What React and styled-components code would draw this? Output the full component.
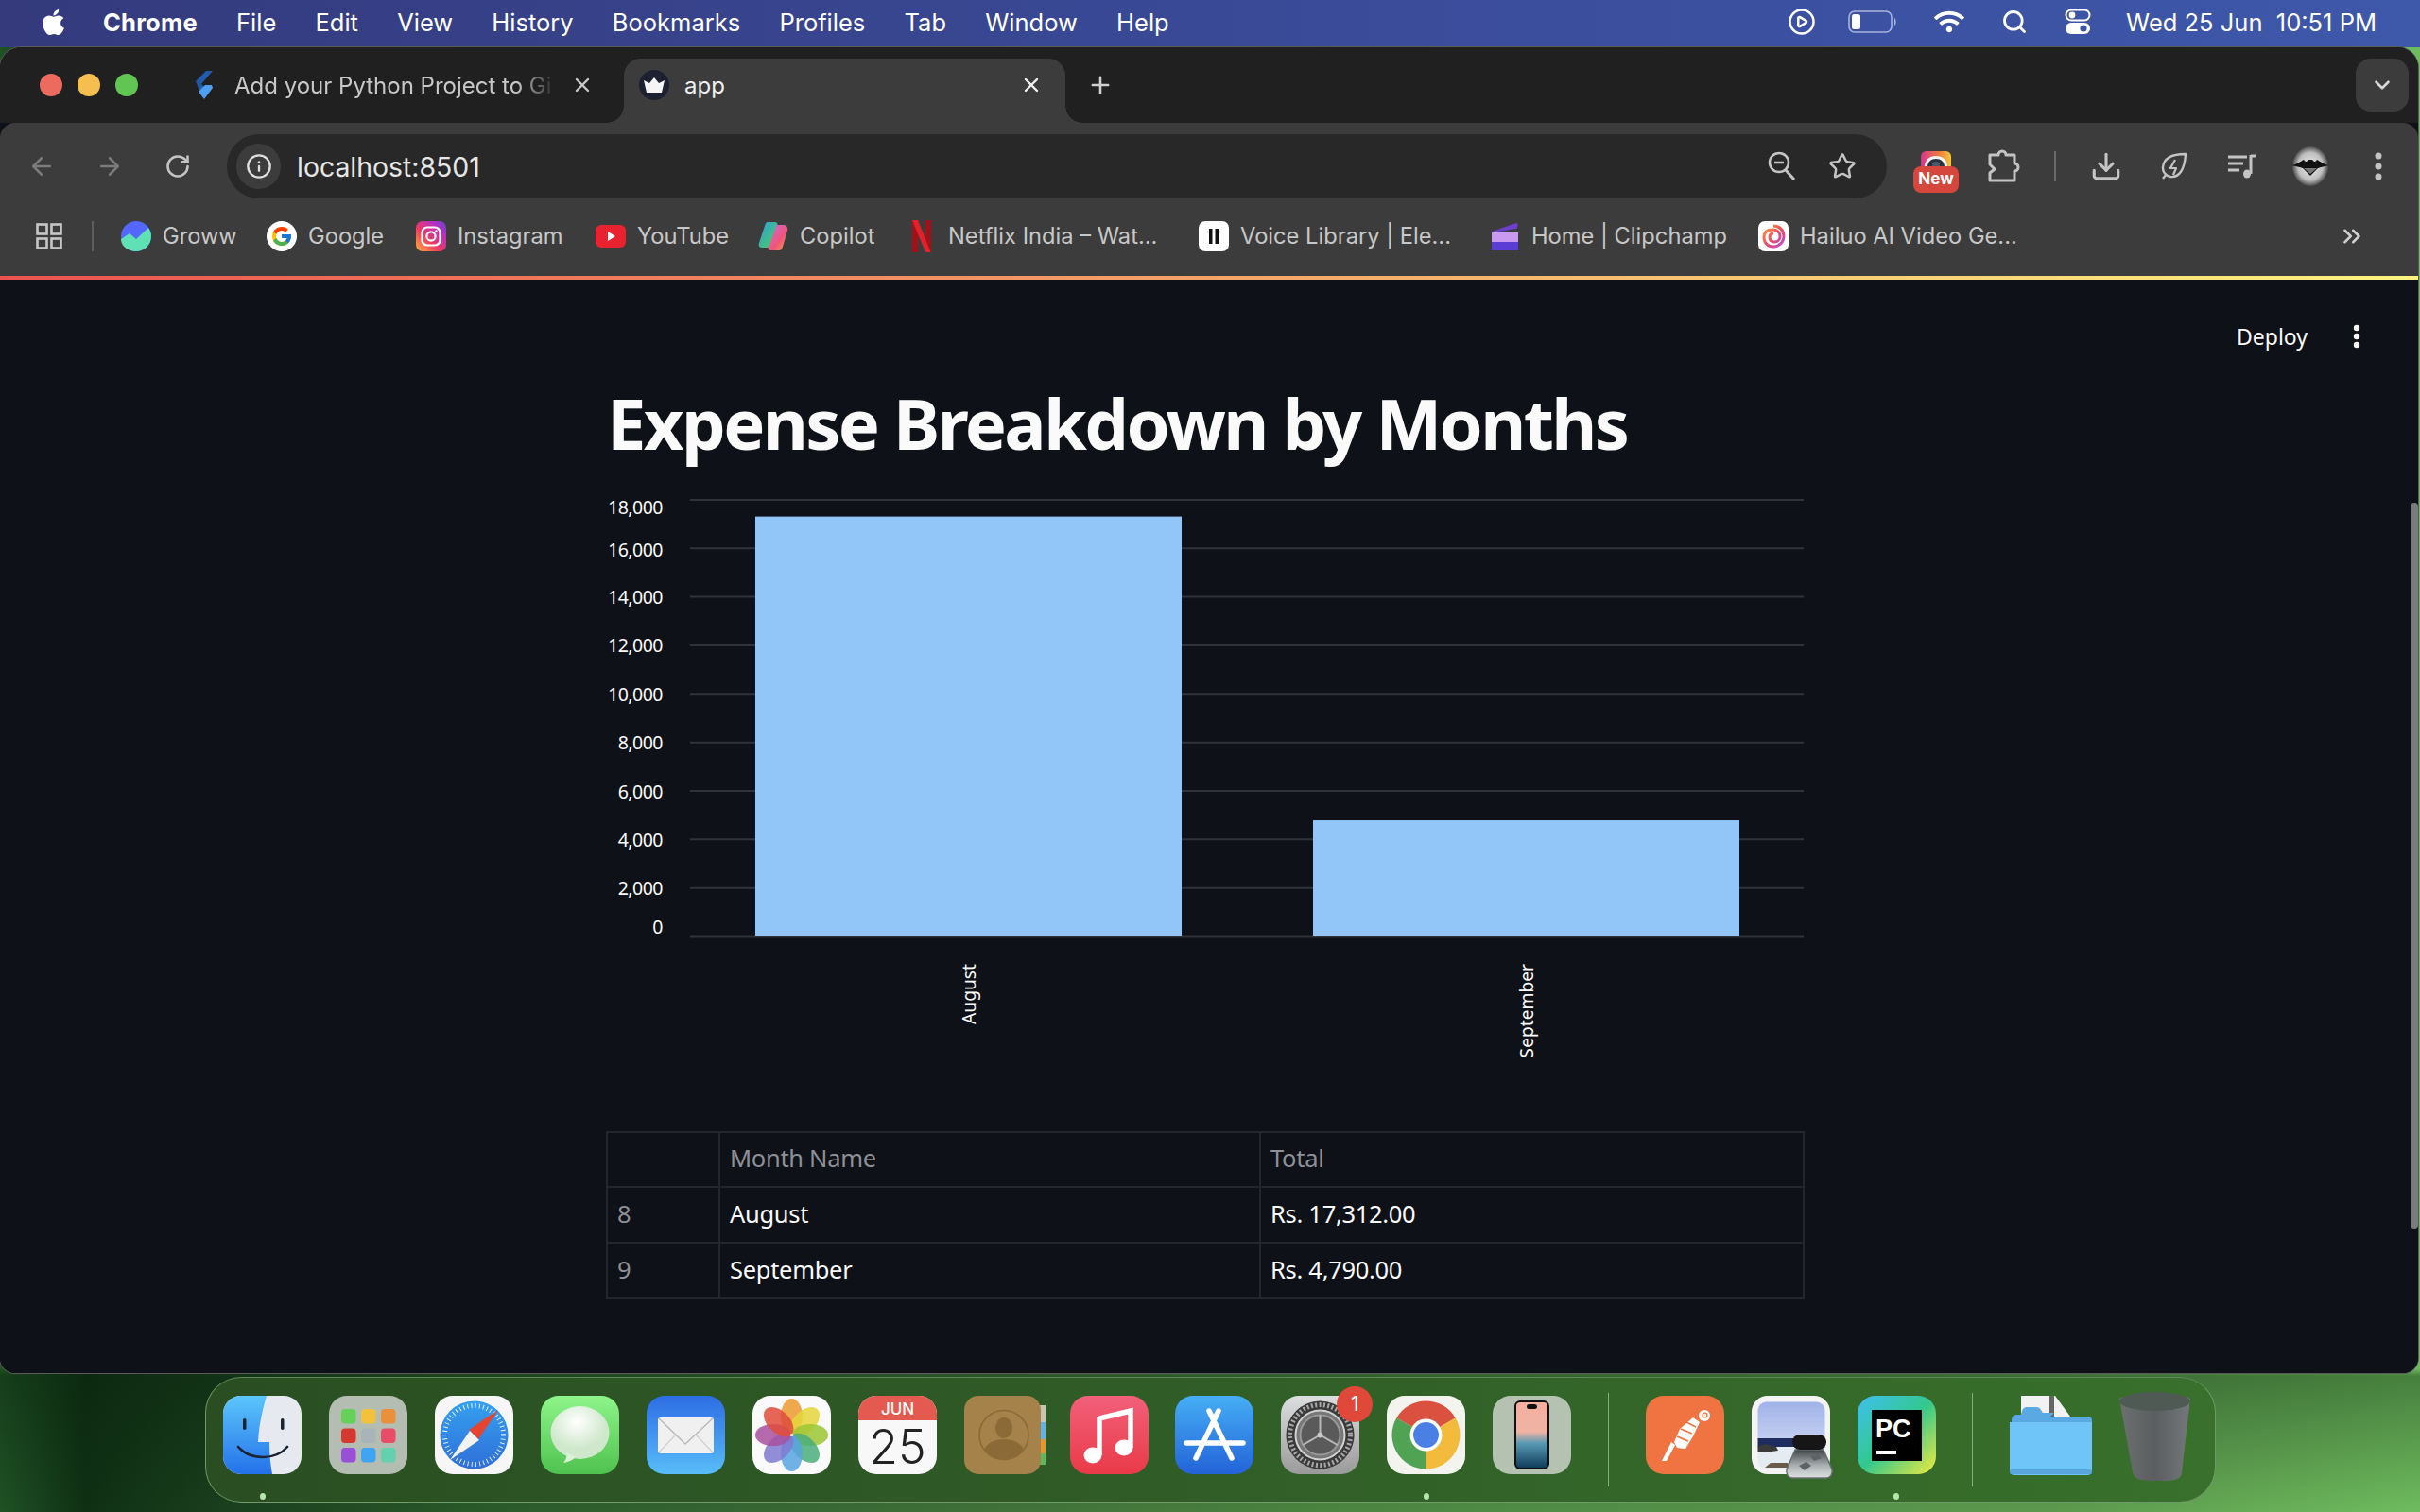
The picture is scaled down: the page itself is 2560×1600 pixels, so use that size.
import React from 'react';
import styled, { createGlobalStyle } from 'styled-components';
import { ArrowLeft, ArrowRight, RotateCw, Info, Star, Plus, X, ChevronDown, ChevronsRight, CirclePlay, Search, Download } from 'lucide-react';
import { FaApple, FaWifi } from 'react-icons/fa';
import { FcGoogle } from 'react-icons/fc';

const GlobalStyle = createGlobalStyle`
  html, body { margin: 0; padding: 0; background: #1b3a1c; }
  * { box-sizing: border-box; }
`;

const Screen = styled.div`
  width: 2560px;
  height: 1600px;
  overflow: hidden;
  display: flex;
  flex-direction: column;
  font-family: Inter, "Liberation Sans", sans-serif;
  background:
    linear-gradient(180deg, transparent 90.5%, rgba(6, 30, 10, 0.38) 91%, rgba(6, 30, 10, 0) 100%),
    linear-gradient(90deg, #1f5224 0%, #0f3014 3.5%, #16391a 7%, #2a5a2a 20%, #3f7038 40%, #4f8a44 60%, #5c9a4e 85%, #6fbc5e 100%);
`;

/* ---------- mac menu bar ---------- */
const MenuBar = styled.div`
  height: 50px;
  flex: none;
  display: flex;
  align-items: center;
  padding: 0 46px 4px 41px;
  color: #fff;
  font-size: 25.5px;
  background: linear-gradient(90deg, #343a7c 0%, #3a4b99 55%, #3e58aa 100%);
`;
const MenuItems = styled.div`
  display: flex;
  align-items: center;
  gap: 41.2px;
  margin-left: 37px;
`;
const MenuItem = styled.span`
  font-weight: ${p => (p.$strong ? 700 : 400)};
  letter-spacing: ${p => (p.$strong ? '0.2px' : '0')};
`;
const StatusArea = styled.div`
  margin-left: auto;
  display: flex;
  align-items: center;
  color: #fff;
`;
const StatusSlot = styled.span`
  display: flex;
  justify-content: center;
  width: ${p => p.$w}px;
`;
const Clock = styled.span`
  margin-left: 25px;
  white-space: pre;
`;

/* ---------- browser window ---------- */
const Window = styled.div`
  flex: none;
  width: 2558px;
  height: 1403px;
  display: flex;
  flex-direction: column;
  overflow: hidden;
  border-radius: 22px 22px 16px 16px;
  box-shadow: 0 0 0 1px #5a5a5a;
  background: #0e1117;
`;
const TabStrip = styled.div`
  height: 80px;
  flex: none;
  display: flex;
  align-items: flex-end;
  background: #202020;
  color: #c7c7c7;
  font-size: 24px;
`;
const TrafficLights = styled.div`
  align-self: center;
  display: flex;
  gap: 16px;
  padding-left: 42px;
  width: 190px;
`;
const Light = styled.span`
  width: 24px;
  height: 24px;
  border-radius: 50%;
  background: ${p => p.$c};
`;
const Tab = styled.div`
  position: relative;
  height: 68px;
  flex: none;
  display: flex;
  align-items: center;
  width: ${p => p.$w}px;
  padding: 0 ${p => p.$right}px 12px ${p => p.$left}px;
  ${p => p.$active && `
    background: #3c3c3c;
    color: #f0f0f0;
    border-radius: 18px 18px 0 0;
    &::before, &::after {
      content: '';
      position: absolute;
      bottom: 0;
      width: 18px;
      height: 18px;
    }
    &::before { left: -18px; background: radial-gradient(circle at 0 0, transparent 17.5px, #3c3c3c 18px); }
    &::after { right: -18px; background: radial-gradient(circle at 100% 0, transparent 17.5px, #3c3c3c 18px); }
  `}
`;
const TabTitle = styled.span`
  margin-left: ${p => p.$gap}px;
  white-space: nowrap;
  width: ${p => p.$w}px;
  ${p => p.$fade && `mask-image: linear-gradient(90deg, #000 88%, transparent 100%);`}
`;
const TabClose = styled.span`
  margin-left: auto;
  display: flex;
`;
const NewTab = styled.span`
  display: flex;
  align-self: center;
  margin-left: 23px;
  color: #d0d0d0;
`;
const TabSearch = styled.span`
  margin-left: auto;
  margin-right: 10px;
  align-self: center;
  width: 56px;
  height: 56px;
  display: flex;
  align-items: center;
  justify-content: center;
  border-radius: 16px;
  background: #3c3c3c;
  color: #d8d8d8;
`;

const Toolbar = styled.div`
  flex: none;
  height: 162px;
  background: #3c3c3c;
  border-radius: 16px 16px 0 0;
  display: flex;
  flex-direction: column;
`;
const AddressRow = styled.div`
  display: flex;
  align-items: center;
  height: 80px;
  padding: 12px 6px 0 8px;
`;
const NavButton = styled.span`
  width: 72px;
  display: flex;
  justify-content: center;
  color: ${p => (p.$off ? '#7b7b7b' : '#c4c4c4')};
`;
const AddressBar = styled.div`
  flex: 1;
  height: 68px;
  margin: 0 16px 0 16px;
  padding: 0 32px 0 10px;
  border-radius: 34px;
  background: #282828;
  display: flex;
  align-items: center;
  color: #e6e6e6;
  font-size: 28.4px;
`;
const InfoPill = styled.span`
  width: 47px;
  height: 48px;
  border-radius: 24px;
  background: #3c3c3c;
  display: flex;
  align-items: center;
  justify-content: center;
  color: #dedede;
`;
const AddressText = styled.span`
  margin-left: 17px;
`;
const AddressActions = styled.span`
  margin-left: auto;
  display: flex;
  align-items: center;
  gap: 34px;
  color: #c4c4c4;
`;
const ToolButton = styled.span`
  position: relative;
  width: 72px;
  height: 56px;
  display: flex;
  align-items: center;
  justify-content: center;
  color: #c4c4c4;
`;
const ToolDivider = styled.span`
  width: 36px;
  display: flex;
  justify-content: center;
  &::before {
    content: '';
    width: 2px;
    height: 32px;
    background: #6a6a6a;
  }
`;
const NewBadge = styled.span`
  position: absolute;
  left: 12px;
  top: 28px;
  width: 48px;
  height: 28px;
  border-radius: 8px;
  background: #d5463d;
  color: #fff;
  font-size: 17px;
  font-weight: 700;
  text-align: center;
  line-height: 27px;
`;
const RainbowSlot = styled.span`
  position: absolute;
  left: 20px;
  top: 12px;
  display: flex;
`;

const BookmarkRow = styled.div`
  display: flex;
  align-items: center;
  height: 82px;
  padding: 0 0 3px 38px;
  color: #c7c7c7;
  font-size: 23.7px;
`;
const AppsButton = styled.span`
  display: flex;
  width: 28px;
`;
const BookmarkDivider = styled.span`
  width: 2px;
  height: 32px;
  margin: 0 29px 0 31px;
  background: #5e5e5e;
`;
const Bookmark = styled.span`
  width: ${p => p.$w}px;
  flex: none;
  display: flex;
  align-items: center;
  gap: 12px;
  white-space: nowrap;
`;
const BookmarkIcon = styled.span`
  width: 32px;
  height: 32px;
  flex: none;
  display: flex;
  align-items: center;
  justify-content: center;
`;
const MoreBookmarks = styled.span`
  margin-left: auto;
  margin-right: 55px;
  display: flex;
  color: #d0d0d0;
`;
const LoadBar = styled.div`
  flex: none;
  height: 4px;
  background: linear-gradient(90deg, #ec5350, #fdf480);
`;

/* ---------- streamlit page ---------- */
const Page = styled.div`
  position: relative;
  flex: 1;
  background: #0e1117;
  color: #fafafa;
  font-family: "Noto Sans", "Open Sans", sans-serif;
`;
const PageHeader = styled.div`
  height: 120px;
  display: flex;
  align-items: center;
  justify-content: flex-end;
  padding-right: 61px;
  gap: 48px;
  font-size: 23px;
`;
const ScrollThumb = styled.div`
  position: absolute;
  right: 0;
  top: 236px;
  width: 8px;
  height: 768px;
  border-radius: 4px;
  background: #7a7b7d;
`;
const Main = styled.div`
  width: 1268px;
  margin-left: 641px;
`;
const Title = styled.h1`
  margin: 0;
  height: 104px;
  padding: 0 0 0 1px;
  font-size: 74px;
  line-height: 64px;
  font-weight: 700;
  letter-spacing: -2.6px;
  white-space: nowrap;
  color: #fafafa;
`;
const ChartSvg = styled.svg`
  display: block;
  width: 1268px;
  height: 677px;
  font-family: "Noto Sans", sans-serif;
`;
const DataTable = styled.table`
  width: 1268px;
  table-layout: fixed;
  border-collapse: collapse;
  font-size: 25.5px;
  letter-spacing: -0.3px;
  & col:nth-child(1) { width: 119px; }
  & col:nth-child(2) { width: 572px; }
`;
const Th = styled.th`
  height: 58px;
  padding: 0 10px 4px;
  border: 2px solid #24262e;
  color: #8e9096;
  font-weight: 400;
  text-align: left;
`;
const Td = styled.td`
  height: 59px;
  padding: 0 10px 4px;
  border: 2px solid #24262e;
  color: ${p => (p.$index ? '#8e9096' : '#fafafa')};
`;

/* ---------- dock ---------- */
const Dock = styled.div`
  flex: none;
  width: 2127px;
  height: 133px;
  margin: 4px 0 0 217px;
  padding: 19px 0 0 18px;
  display: flex;
  align-items: flex-start;
  gap: 28.95px;
  border-radius: 38px;
  border: 1.5px solid #6f9a68;
  border-top-color: #5d8a58;
  background: linear-gradient(90deg, #2a4e22, #2f5a26 40%, #38702c);
`;
const DockSlot = styled.div`
  position: relative;
  flex: none;
  width: ${p => p.$w || 83}px;
  display: flex;
  flex-direction: column;
  align-items: center;
  gap: 20px;
  & > svg { display: block; overflow: visible; }
`;
const RunningDot = styled.span`
  width: 6px;
  height: 7px;
  border-radius: 50%;
  background: ${p => (p.$on ? '#b5e6ac' : 'transparent')};
`;
const DockDivider = styled.span`
  flex: none;
  width: 1.5px;
  height: 99px;
  margin: -3px 9.5px 0;
  background: #86ad7f;
`;
const DockBadge = styled.span`
  position: absolute;
  top: -10px;
  right: -14px;
  width: 38px;
  height: 38px;
  border-radius: 50%;
  background: #e0483a;
  color: #fff;
  font-size: 21px;
  text-align: center;
  line-height: 38px;
`;

/* ---------- toolbar glyphs ---------- */
const BatteryIcon = () => (
  <svg width="52" height="24" viewBox="0 0 52 24">
    <rect x="1" y="1" width="45" height="22" rx="6" fill="none" stroke="#a9b4dc" strokeWidth="1.6" />
    <rect x="4" y="4" width="9" height="16" rx="2.5" fill="#fff" />
    <path d="M49 8c2 1 2.5 7 0 8z" fill="#a9b4dc" />
  </svg>
);
const ControlIcon = () => (
  <svg width="28" height="28" viewBox="0 0 28 28">
    <rect x="1.5" y="1.5" width="25" height="11" rx="5.5" fill="none" stroke="#fff" strokeWidth="2" />
    <circle cx="8" cy="7" r="3.4" fill="#fff" />
    <rect x="1" y="15" width="26" height="12" rx="6" fill="#fff" />
    <circle cx="20" cy="21" r="3.6" fill="#3c55a6" />
  </svg>
);
const ZoomGlass = () => (
  <svg width="30" height="32" viewBox="0 0 30 32" fill="none" stroke="currentColor" strokeWidth="2.6">
    <circle cx="12" cy="12" r="10" />
    <path d="M7 12h10" />
    <path d="M19 20l9 10" strokeWidth="3" />
  </svg>
);
const PuzzleIcon = () => (
  <svg width="36" height="36" viewBox="0 0 36 36" fill="none" stroke="currentColor" strokeWidth="3" strokeLinejoin="round">
    <path d="M3 6h9a4 4 0 0 1 8 0h9v9a4 4 0 0 1 0 8v10H3v-8l5-4-5-5z" />
  </svg>
);
const RainbowIcon = () => (
  <svg width="32" height="17" viewBox="0 0 32 17">
    <defs>
      <linearGradient id="rainbowBg" x1="0" y1="0" x2="1" y2="0">
        <stop offset="0" stopColor="#d9348f" />
        <stop offset="0.6" stopColor="#ee7b3c" />
        <stop offset="1" stopColor="#f2c83f" />
      </linearGradient>
    </defs>
    <path d="M6 0h20c3 0 6 2 6 6v11H0V6c0-4 3-6 6-6z" fill="url(#rainbowBg)" />
    <path d="M4 17C4 9 9 5 16 5s12 4 12 12z" fill="#f5f5f5" />
    <path d="M7 17c0-6 4-9 9-9s9 3 9 9z" fill="#28323c" />
    <circle cx="16" cy="15" r="4" fill="#4a5a68" />
  </svg>
);
const LeafBolt = () => (
  <svg width="32" height="32" viewBox="0 0 32 32" fill="none" stroke="currentColor" strokeWidth="2.4" strokeLinejoin="round">
    <path d="M28 3C16 3 5 6 4 17c-.4 5 3 9 8 10 9 1 15-7 16-24z" />
    <path d="M17 9l-5 9h6l-3 7" strokeWidth="2.2" />
    <path d="M4 29l4-5" />
  </svg>
);
const QueueIcon = () => (
  <svg width="32" height="32" viewBox="0 0 32 32" fill="none" stroke="currentColor" strokeWidth="3">
    <path d="M1 6h20M1 13h16M1 20h12" />
    <path d="M25 4v20" />
    <path d="M25 5h6" />
    <ellipse cx="21" cy="24" rx="4" ry="4.5" fill="currentColor" stroke="none" />
  </svg>
);
const BatAvatar = () => (
  <svg width="42" height="42" viewBox="0 0 42 42">
    <defs>
      <radialGradient id="avatarGlow">
        <stop offset="0" stopColor="#f2f2f2" />
        <stop offset="0.7" stopColor="#bdbdbd" />
        <stop offset="1" stopColor="#4a4a4a" />
      </radialGradient>
    </defs>
    <ellipse cx="21" cy="21" rx="19" ry="21" fill="url(#avatarGlow)" />
    <path d="M1 20c6-1 9-4 13-6 1 1 1 2 3 2l2-2h4l2 2c2 0 2-1 3-2 4 2 7 5 13 6-5 1-9 2-12 3l-8 8-8-8c-3-1-7-2-12-3z" fill="#111" />
    <path d="M14 23h14l-7 6z" fill="#777" />
  </svg>
);
const AppsIcon = () => (
  <svg width="28" height="28" viewBox="0 0 28 28" fill="none" stroke="#c7c7c7" strokeWidth="2.6">
    <rect x="1.5" y="1.5" width="10" height="10" />
    <rect x="16.5" y="1.5" width="10" height="10" />
    <rect x="1.5" y="16.5" width="10" height="10" />
    <rect x="16.5" y="16.5" width="10" height="10" />
  </svg>
);

/* ---------- favicons ---------- */
const FlutterFavicon = () => (
  <svg width="18" height="30" viewBox="0 0 18 30">
    <path d="M11 0h7L6 14l-6-3z" fill="#1f5cb0" />
    <path d="M0 11l6 3 3 3-5 4z" fill="#1f5cb0" />
    <path d="M10 15h7l1 3-9 12-6-8z" fill="#4f9ff0" />
  </svg>
);
const CrownFavicon = () => (
  <svg width="32" height="32" viewBox="0 0 32 32">
    <circle cx="16" cy="16" r="16" fill="#1d2030" />
    <path d="M5 11l6 3 5-6 5 6 6-3-3 13H8z" fill="#f5f5f5" />
  </svg>
);
const GrowwIcon = () => (
  <svg width="32" height="32" viewBox="0 0 32 32">
    <circle cx="16" cy="16" r="16" fill="#5367ff" />
    <path d="M0 19l9-6 7 6 13-12c2 3 3 6 3 9 0 9-7 16-16 16S0 26 0 19z" fill="#5fe0b5" />
  </svg>
);
const GoogleIcon = () => (
  <svg width="32" height="32" viewBox="0 0 32 32">
    <circle cx="16" cy="16" r="16" fill="#fff" />
    <FcGoogle size={24} x="4" y="4" />
  </svg>
);
const InstagramIcon = () => (
  <svg width="32" height="32" viewBox="0 0 32 32">
    <defs>
      <linearGradient id="instaGrad" x1="0" y1="1" x2="1" y2="0">
        <stop offset="0" stopColor="#fdb43c" />
        <stop offset="0.4" stopColor="#ee3a63" />
        <stop offset="0.75" stopColor="#b92fc0" />
        <stop offset="1" stopColor="#5a49d8" />
      </linearGradient>
    </defs>
    <rect width="32" height="32" rx="7" fill="url(#instaGrad)" />
    <rect x="6.5" y="6.5" width="19" height="19" rx="5.5" fill="none" stroke="#fff" strokeWidth="2.2" />
    <circle cx="16" cy="16" r="4.6" fill="none" stroke="#fff" strokeWidth="2.2" />
    <circle cx="21.5" cy="10.5" r="1.2" fill="#fff" />
  </svg>
);
const YouTubeIcon = () => (
  <svg width="32" height="24" viewBox="0 0 32 24">
    <rect width="32" height="24" rx="6" fill="#e8222e" />
    <path d="M13 7l8 5-8 5z" fill="#fff" />
  </svg>
);
const CopilotIcon = () => (
  <svg width="32" height="32" viewBox="0 0 32 32">
    <defs>
      <linearGradient id="copilotA" x1="0" y1="0" x2="1" y2="1">
        <stop offset="0" stopColor="#2e9be8" />
        <stop offset="0.7" stopColor="#45c27a" />
        <stop offset="1" stopColor="#e8d84a" />
      </linearGradient>
      <linearGradient id="copilotB" x1="0" y1="0" x2="1" y2="1">
        <stop offset="0" stopColor="#c86be0" />
        <stop offset="0.6" stopColor="#f0557a" />
        <stop offset="1" stopColor="#f7a63b" />
      </linearGradient>
    </defs>
    <path d="M10 1h8c2 0 3 2 2 4l-7 20c-1 2-2 3-4 3H4c-3 0-4-2-3-5L7 5c.5-2 1.5-4 3-4z" fill="url(#copilotA)" />
    <path d="M20 4h7c3 0 5 3 4 6l-5 17c-1 3-2 4-4 4h-9c-2 0-3-2-2-4l8-21c.2-1 .5-2 1-2z" fill="url(#copilotB)" />
  </svg>
);
const NetflixIcon = () => (
  <svg width="20" height="34" viewBox="0 0 20 34">
    <path d="M0 0h6v34l-6 1z" fill="#a51016" />
    <path d="M14 0h6v35l-6-1z" fill="#a51016" />
    <path d="M0 0h6l14 35-6-1z" fill="#e3212b" />
  </svg>
);
const VoiceIcon = () => (
  <svg width="32" height="32" viewBox="0 0 32 32">
    <rect width="32" height="32" rx="7" fill="#fff" />
    <rect x="11" y="8" width="3.5" height="16" fill="#111" />
    <rect x="17.5" y="8" width="3.5" height="16" fill="#111" />
  </svg>
);
const ClipchampIcon = () => (
  <svg width="32" height="32" viewBox="0 0 32 32">
    <path d="M2 11L28 2c2-.5 2 5 0 6L2 12z" fill="#6d3fd0" />
    <rect x="2" y="12" width="28" height="10" fill="#c99af0" />
    <rect x="2" y="22" width="28" height="9" fill="#5b3dd6" />
  </svg>
);
const HailuoIcon = () => (
  <svg width="32" height="32" viewBox="0 0 32 32" fill="none">
    <defs>
      <linearGradient id="hailuoGrad" x1="0" y1="0" x2="1" y2="1">
        <stop offset="0" stopColor="#f7a13b" />
        <stop offset="0.5" stopColor="#ef4a5a" />
        <stop offset="1" stopColor="#b44fe0" />
      </linearGradient>
    </defs>
    <rect width="32" height="32" rx="7" fill="#fff" />
    <path d="M16 5c7 0 11 5 11 11s-5 11-11 11S6 23 6 17s4-8 9-8 8 3 8 7-3 6-6 6-5-2-5-5 2-4 4-4" stroke="url(#hailuoGrad)" strokeWidth="3" />
  </svg>
);

/* ---------- dock icons ---------- */
const FinderIcon = () => (
  <svg width="83" height="83" viewBox="0 0 83 83">
    <defs>
      <linearGradient id="finderBlue" x1="0" y1="0" x2="0" y2="1">
        <stop offset="0" stopColor="#5cc6fb" />
        <stop offset="1" stopColor="#2471ea" />
      </linearGradient>
      <clipPath id="finderClip"><rect width="83" height="83" rx="19" /></clipPath>
    </defs>
    <g clipPath="url(#finderClip)">
      <rect width="83" height="83" fill="#e6eaf0" />
      <path d="M0 0h46c-4 14-8 30-9 49h12c0 12 1 23 3 34H0z" fill="url(#finderBlue)" />
    </g>
    <rect x="21" y="24" width="3.5" height="12" rx="1.7" fill="#1b2433" />
    <rect x="61" y="24" width="3.5" height="12" rx="1.7" fill="#1b2433" />
    <path d="M16 54c6 7 15 11 26 11s20-4 26-11" fill="none" stroke="#1b2433" strokeWidth="2.6" strokeLinecap="round" />
  </svg>
);
const launchColors = ['#67d05a', '#f3c23d', '#e8913a', '#d5382f', '#a9b4b8', '#e84c66', '#9a4fd8', '#3fa4f2', '#63d0b0'];
const LaunchpadIcon = () => (
  <svg width="83" height="83" viewBox="0 0 83 83">
    <rect width="83" height="83" rx="19" fill="#b3bdb1" />
    {launchColors.map((c, i) => (
      <rect key={c} x={13 + (i % 3) * 21} y={14 + Math.floor(i / 3) * 20.5} width="15.5" height="15.5" rx="4" fill={c} />
    ))}
  </svg>
);
const SafariIcon = () => (
  <svg width="83" height="83" viewBox="0 0 83 83">
    <defs>
      <linearGradient id="safariBlue" x1="0" y1="0" x2="0" y2="1">
        <stop offset="0" stopColor="#35a0ee" />
        <stop offset="1" stopColor="#2f6fd8" />
      </linearGradient>
    </defs>
    <rect width="83" height="83" rx="19" fill="#f6f6f6" />
    <circle cx="41.5" cy="41.5" r="36" fill="url(#safariBlue)" />
    <circle cx="41.5" cy="41.5" r="31" fill="none" stroke="#fff" strokeWidth="5" strokeDasharray="1 3.2" opacity=".85" />
    <path d="M67 15L36 36l10 10z" fill="#e5452f" />
    <path d="M16 68l31-21-10-10z" fill="#f2f2f2" />
  </svg>
);
const MessagesIcon = () => (
  <svg width="83" height="83" viewBox="0 0 83 83">
    <defs>
      <linearGradient id="messagesBg" x1="0" y1="0" x2="0" y2="1">
        <stop offset="0" stopColor="#8ef58a" />
        <stop offset="1" stopColor="#4fc24e" />
      </linearGradient>
      <radialGradient id="messagesBubble" cx="0.45" cy="0.3">
        <stop offset="0" stopColor="#ffffff" />
        <stop offset="1" stopColor="#cfe8cc" />
      </radialGradient>
    </defs>
    <rect width="83" height="83" rx="19" fill="url(#messagesBg)" />
    <ellipse cx="41.5" cy="39" rx="31" ry="28" fill="url(#messagesBubble)" />
    <path d="M27 60c1 4 0 7-3 11 6-1 10-3 13-6z" fill="#dcefd8" />
  </svg>
);
const MailIcon = () => (
  <svg width="83" height="83" viewBox="0 0 83 83">
    <defs>
      <linearGradient id="mailBg" x1="0" y1="0" x2="0" y2="1">
        <stop offset="0" stopColor="#2d6de4" />
        <stop offset="1" stopColor="#58bdf8" />
      </linearGradient>
    </defs>
    <rect width="83" height="83" rx="19" fill="url(#mailBg)" />
    <rect x="12" y="23" width="59" height="38" rx="3" fill="#f0f0f0" />
    <path d="M13 24l28 27 29-27" fill="none" stroke="#b9b9b9" strokeWidth="1.4" />
    <path d="M13 60l18-19M70 60L52 41" fill="none" stroke="#cfcfcf" strokeWidth="1.2" />
  </svg>
);
const petalColors = ['#ee9a32', '#e6d53a', '#9cc636', '#4cae7c', '#58a4e2', '#7f7ad0', '#a852a0', '#df4d3a'];
const PhotosIcon = () => (
  <svg width="83" height="83" viewBox="0 0 83 83">
    <rect width="83" height="83" rx="19" fill="#fafafa" />
    {petalColors.map((c, i) => (
      <ellipse key={c} cx="41.5" cy="22" rx="11.5" ry="19" fill={c} opacity=".86" transform={`rotate(${i * 45} 41.5 41.5)`} />
    ))}
    <circle cx="41.5" cy="41.5" r="1.6" fill="#fff" />
  </svg>
);
const CalendarIcon = () => (
  <svg width="83" height="83" viewBox="0 0 83 83">
    <defs><clipPath id="calClip"><rect width="83" height="83" rx="19" /></clipPath></defs>
    <g clipPath="url(#calClip)">
      <rect width="83" height="83" fill="#f8f8f8" />
      <rect width="83" height="26" fill="#e45a50" />
    </g>
    <text x="41.5" y="20" textAnchor="middle" fontSize="17" fontWeight="500" fill="#fff" fontFamily="Inter, sans-serif">JUN</text>
    <text x="41.5" y="72" textAnchor="middle" fontSize="50" fontWeight="300" fill="#222" fontFamily="Inter, sans-serif">25</text>
  </svg>
);
const ContactsIcon = () => (
  <svg width="83" height="83" viewBox="0 0 83 83">
    <rect x="70" y="10" width="16" height="18" fill="#c9c4b5" />
    <rect x="70" y="28" width="16" height="18" fill="#5eb4ea" />
    <rect x="70" y="46" width="16" height="15" fill="#e9952e" />
    <rect x="70" y="61" width="16" height="12" fill="#5cb85a" />
    <rect width="81" height="83" rx="15" fill="#a5824a" />
    <circle cx="42" cy="41.5" r="26" fill="none" stroke="#8b6a37" strokeWidth="1.6" />
    <ellipse cx="42" cy="34" rx="9" ry="11" fill="#8b6a37" />
    <path d="M21 57c4-8 12-11 21-11s17 3 21 11c-5 7-13 10-21 10s-16-3-21-10z" fill="#8b6a37" />
  </svg>
);
const MusicIcon = () => (
  <svg width="83" height="83" viewBox="0 0 83 83">
    <defs>
      <linearGradient id="musicBg" x1="0" y1="0" x2="0" y2="1">
        <stop offset="0" stopColor="#f2607a" />
        <stop offset="1" stopColor="#e93a48" />
      </linearGradient>
    </defs>
    <rect width="83" height="83" rx="19" fill="url(#musicBg)" />
    <path d="M31 24l33-8v39" fill="none" stroke="#fff" strokeWidth="5.5" />
    <path d="M31 22v41" fill="none" stroke="#fff" strokeWidth="5.5" />
    <ellipse cx="24" cy="63" rx="9.5" ry="8.5" fill="#fff" />
    <ellipse cx="57" cy="55" rx="9.5" ry="8.5" fill="#fff" />
  </svg>
);
const AppStoreIcon = () => (
  <svg width="83" height="83" viewBox="0 0 83 83">
    <defs>
      <linearGradient id="storeBg" x1="0" y1="0" x2="0" y2="1">
        <stop offset="0" stopColor="#46aef5" />
        <stop offset="1" stopColor="#2363d8" />
      </linearGradient>
    </defs>
    <rect width="83" height="83" rx="19" fill="url(#storeBg)" />
    <g stroke="#fff" strokeWidth="5.5" strokeLinecap="round" fill="none">
      <path d="M46 16L22 66" />
      <path d="M36 16l24 50" />
      <path d="M12 50h60" />
    </g>
  </svg>
);
const gearSpokes = [90, 210, 330];
const SettingsIcon = () => (
  <svg width="83" height="83" viewBox="0 0 83 83">
    <defs>
      <linearGradient id="settingsBg" x1="0" y1="0" x2="0" y2="1">
        <stop offset="0" stopColor="#dcdedf" />
        <stop offset="1" stopColor="#9a9a9a" />
      </linearGradient>
    </defs>
    <rect width="83" height="83" rx="19" fill="url(#settingsBg)" />
    <circle cx="41.5" cy="41.5" r="36" fill="#3a3a3a" />
    <circle cx="41.5" cy="41.5" r="32" fill="none" stroke="#a8a8a8" strokeWidth="5" strokeDasharray="2 2.4" />
    <circle cx="41.5" cy="41.5" r="26" fill="#777" stroke="#d2d2d2" strokeWidth="2" />
    <circle cx="41.5" cy="41.5" r="21" fill="#5a5a5a" stroke="#9a9a9a" strokeWidth="2" />
    {gearSpokes.map(a => (
      <line
        key={a}
        x1="41.5"
        y1="41.5"
        x2={41.5 + 21 * Math.cos((a * Math.PI) / 180)}
        y2={41.5 - 21 * Math.sin((a * Math.PI) / 180)}
        stroke="#b8b8b8"
        strokeWidth="2"
      />
    ))}
    <circle cx="41.5" cy="41.5" r="3" fill="#c8c8c8" />
  </svg>
);
const wedge = (from, to, r = 36) => {
  const rad = a => (a * Math.PI) / 180;
  const x = a => 41.5 + r * Math.cos(rad(a));
  const y = a => 41.5 - r * Math.sin(rad(a));
  return `M41.5 41.5L${x(from)} ${y(from)}A${r} ${r} 0 0 0 ${x(to)} ${y(to)}Z`;
};
const ChromeIcon = () => (
  <svg width="83" height="83" viewBox="0 0 83 83">
    <rect width="83" height="83" rx="19" fill="#f4f4ee" />
    <path d={wedge(30, 150)} fill="#da5140" />
    <path d={wedge(150, 270)} fill="#4fa353" />
    <path d={wedge(270, 390)} fill="#f2bb3c" />
    <circle cx="41.5" cy="41.5" r="17" fill="#fff" />
    <circle cx="41.5" cy="41.5" r="13.5" fill="#4a7fe6" />
  </svg>
);
const PhoneIcon = () => (
  <svg width="83" height="83" viewBox="0 0 83 83">
    <defs>
      <linearGradient id="phoneScreen" x1="0" y1="0" x2="0" y2="1">
        <stop offset="0" stopColor="#f4aea0" />
        <stop offset="0.45" stopColor="#f0b4a4" />
        <stop offset="0.62" stopColor="#5a9ab4" />
        <stop offset="1" stopColor="#0c3a58" />
      </linearGradient>
    </defs>
    <rect width="83" height="83" rx="19" fill="#b5c2b2" />
    <rect x="24" y="6" width="35" height="71" rx="5" fill="url(#phoneScreen)" stroke="#111" strokeWidth="2" />
    <rect x="36" y="9" width="11" height="5" rx="2.5" fill="#111" />
  </svg>
);
const PostmanIcon = () => (
  <svg width="83" height="83" viewBox="0 0 83 83">
    <rect width="83" height="83" rx="19" fill="#f07442" />
    <path d="M17 69l10-20 4 3-9 17z" fill="#fff" />
    <path d="M30 49l6-14 14-12 7 5-7 15-8 13-9-1z" fill="#fff" />
    <path d="M33 43l12 5M37 35l12 5M43 28l10 5" stroke="#f07442" strokeWidth="1.8" fill="none" />
    <circle cx="62" cy="21" r="6" fill="#fff" />
    <circle cx="62.5" cy="20.5" r="2.4" fill="none" stroke="#f07442" strokeWidth="1.4" />
  </svg>
);
const PreviewIcon = () => (
  <svg width="83" height="83" viewBox="0 0 83 83">
    <defs>
      <linearGradient id="previewSky" x1="0" y1="0" x2="0" y2="1">
        <stop offset="0" stopColor="#a0b3e8" />
        <stop offset="1" stopColor="#c3cef0" />
      </linearGradient>
      <linearGradient id="loupeGlass" x1="0" y1="0" x2="0" y2="1">
        <stop offset="0" stopColor="#3e4345" />
        <stop offset="0.55" stopColor="#a9aeb0" />
        <stop offset="1" stopColor="#dfe2e2" />
      </linearGradient>
      <clipPath id="previewClip"><rect x="6.5" y="6.5" width="71" height="71" rx="9" /></clipPath>
    </defs>
    <rect width="83" height="83" rx="17" fill="#f4f4f4" />
    <g clipPath="url(#previewClip)">
      <rect x="6" y="6" width="72" height="40" fill="url(#previewSky)" />
      <rect x="6" y="45" width="72" height="10" fill="#1e2c60" />
      <rect x="6" y="54" width="72" height="24" fill="#e4ecf2" />
      <path d="M6 54l8-3 12 3 2 4-14 2-8-1z" fill="#3a3a38" />
      <path d="M14 76l6-5 18 0 6 5z" fill="#6a5c48" />
    </g>
    <path d="M46 57h30l9 21c1 5-2 9-6 9H43c-4 0-7-4-6-9z" fill="url(#loupeGlass)" stroke="#6a6e70" strokeWidth="1.4" />
    <path d="M50 74l8-4 5 4-7 5zM62 64l8-2 4 4-8 3z" fill="#5e6366" />
    <rect x="43" y="41" width="36" height="16" rx="8" fill="#161616" />
  </svg>
);
const PyCharmIcon = () => (
  <svg width="83" height="83" viewBox="0 0 83 83">
    <defs>
      <linearGradient id="pycharmBg" x1="0" y1="0" x2="1" y2="1">
        <stop offset="0" stopColor="#3fc0f0" />
        <stop offset="0.5" stopColor="#33c88c" />
        <stop offset="1" stopColor="#f2ea3e" />
      </linearGradient>
    </defs>
    <rect width="83" height="83" rx="19" fill="url(#pycharmBg)" />
    <rect x="15" y="15" width="53" height="54" fill="#000" />
    <text x="19" y="44" fontSize="27" fontWeight="700" fill="#fff" fontFamily="'Liberation Sans', sans-serif">PC</text>
    <rect x="20" y="58" width="21" height="4" fill="#fff" />
  </svg>
);
const FolderIcon = () => (
  <svg width="87" height="83" viewBox="0 0 87 83">
    <path d="M12 0h36l22 30H12z" fill="#f2f2f2" />
    <rect x="42" y="0" width="5" height="30" fill="#666" />
    <path d="M2 26c0-4 2-6 6-6h4c1-6 3-8 6-8h10c4 0 5 3 7 6h12l-4 4h40c3 0 4 2 4 4v8H2z" fill="#5aa9e2" />
    <path d="M0 28h87v52c0 2-2 4-5 4H5c-3 0-5-2-5-4z" fill="#6fc4f8" />
    <rect y="78" width="87" height="5" rx="2" fill="#58a6dc" />
  </svg>
);
const TrashIcon = () => (
  <svg width="75" height="83" viewBox="0 0 75 83">
    <defs>
      <linearGradient id="trashBody" x1="0" y1="0" x2="1" y2="0">
        <stop offset="0" stopColor="#6d7070" />
        <stop offset="0.5" stopColor="#5a5e60" />
        <stop offset="1" stopColor="#74787a" />
      </linearGradient>
    </defs>
    <path d="M0 3c8-6 67-6 75 0l-9 78c-1 9-9 9-26 9s-24-1-26-9z" fill="url(#trashBody)" />
    <ellipse cx="37.5" cy="6" rx="37.5" ry="10" fill="#4f5a55" />
  </svg>
);

/* ---------- chart data ---------- */
const chartTop = 520;
const chartLeft = 641;
const axisY = 991 - chartTop;
const unit = 25.67 / 1000;
const ticks = [
  { value: 18000, label: 537 },
  { value: 16000, label: 582 },
  { value: 14000, label: 632 },
  { value: 12000, label: 683 },
  { value: 10000, label: 735 },
  { value: 8000, label: 786 },
  { value: 6000, label: 838 },
  { value: 4000, label: 889 },
  { value: 2000, label: 940 },
  { value: 0, label: 981 },
];
const bars = [
  { month: 'August', total: 17312, x: 799, w: 451 },
  { month: 'September', total: 4790, x: 1389, w: 451 },
];

const ExpenseChart = () => (
  <ChartSvg viewBox="0 0 1268 677">
    {ticks.map(t => {
      const y = axisY - t.value * unit;
      return (
        <g key={t.value}>
          <line x1={730 - chartLeft} x2={1908 - chartLeft} y1={y} y2={y} stroke="#31333b" strokeWidth={t.value === 0 ? 3 : 2} />
          <text x={701 - chartLeft} y={t.label - chartTop + 7} textAnchor="end" fontSize="19.5" letterSpacing="-0.5" fill="#fafafa">
            {t.value.toLocaleString('en-US')}
          </text>
        </g>
      );
    })}
    {bars.map(b => (
      <g key={b.month}>
        <rect x={b.x - chartLeft} y={axisY - b.total * unit} width={b.w} height={b.total * unit - 1} fill="#92c5f8" />
        <text
          transform={`translate(${b.x + b.w / 2 + 7 - chartLeft} ${1020 - chartTop}) rotate(-90)`}
          textAnchor="end"
          fontSize="19.2"
          fill="#fafafa"
        >
          {b.month}
        </text>
      </g>
    ))}
  </ChartSvg>
);

const menuItems = ['File', 'Edit', 'View', 'History', 'Bookmarks', 'Profiles', 'Tab', 'Window', 'Help'];
const rows = [
  { id: 8, month: 'August', total: 'Rs. 17,312.00' },
  { id: 9, month: 'September', total: 'Rs. 4,790.00' },
];
const bookmarks = [
  { name: 'Groww', w: 154, icon: <GrowwIcon /> },
  { name: 'Google', w: 158, icon: <GoogleIcon /> },
  { name: 'Instagram', w: 190, icon: <InstagramIcon /> },
  { name: 'YouTube', w: 172, icon: <YouTubeIcon /> },
  { name: 'Copilot', w: 157, icon: <CopilotIcon /> },
  { name: 'Netflix India – Wat...', w: 309, icon: <NetflixIcon /> },
  { name: 'Voice Library | Ele...', w: 308, icon: <VoiceIcon /> },
  { name: 'Home | Clipchamp', w: 284, icon: <ClipchampIcon /> },
  { name: 'Hailuo AI Video Ge...', w: 470, icon: <HailuoIcon /> },
];
const dockApps = [
  { id: 'finder', Icon: FinderIcon, on: true },
  { id: 'launchpad', Icon: LaunchpadIcon },
  { id: 'safari', Icon: SafariIcon },
  { id: 'messages', Icon: MessagesIcon },
  { id: 'mail', Icon: MailIcon },
  { id: 'photos', Icon: PhotosIcon },
  { id: 'calendar', Icon: CalendarIcon },
  { id: 'contacts', Icon: ContactsIcon },
  { id: 'music', Icon: MusicIcon },
  { id: 'appstore', Icon: AppStoreIcon },
  { id: 'settings', Icon: SettingsIcon, badge: '1' },
  { id: 'chrome', Icon: ChromeIcon, on: true },
  { id: 'phone', Icon: PhoneIcon },
  { divider: true, id: 'div1' },
  { id: 'postman', Icon: PostmanIcon },
  { id: 'preview', Icon: PreviewIcon },
  { id: 'pycharm', Icon: PyCharmIcon, on: true },
  { divider: true, id: 'div2' },
  { id: 'folder', Icon: FolderIcon, w: 87 },
  { id: 'trash', Icon: TrashIcon, w: 75 },
];

const App = () => (
  <Screen>
    <GlobalStyle />
    <MenuBar>
      <FaApple size={31} />
      <MenuItems>
        <MenuItem $strong>Chrome</MenuItem>
        {menuItems.map(item => <MenuItem key={item}>{item}</MenuItem>)}
      </MenuItems>
      <StatusArea>
        <StatusSlot $w={44}><CirclePlay size={30} strokeWidth={2} /></StatusSlot>
        <StatusSlot $w={106}><BatteryIcon /></StatusSlot>
        <StatusSlot $w={56}><FaWifi size={32} /></StatusSlot>
        <StatusSlot $w={82}><Search size={28} strokeWidth={2.4} /></StatusSlot>
        <StatusSlot $w={52}><ControlIcon /></StatusSlot>
        <Clock>Wed 25 Jun  10:51 PM</Clock>
      </StatusArea>
    </MenuBar>

    <Window>
      <TabStrip>
        <TrafficLights>
          <Light $c="#ec6a5e" />
          <Light $c="#f4bf4f" />
          <Light $c="#61c554" />
        </TrafficLights>
        <Tab $w={470} $left={17} $right={32}>
          <FlutterFavicon />
          <TabTitle $gap={23} $w={340} $fade>Add your Python Project to Gi</TabTitle>
          <TabClose><X size={24} strokeWidth={2.4} /></TabClose>
        </Tab>
        <Tab $active $w={467} $left={16} $right={24}>
          <CrownFavicon />
          <TabTitle $gap={16} $w={60}>app</TabTitle>
          <TabClose><X size={24} strokeWidth={2.4} /></TabClose>
        </Tab>
        <NewTab><Plus size={28} strokeWidth={2.2} /></NewTab>
        <TabSearch><ChevronDown size={26} strokeWidth={2.4} /></TabSearch>
      </TabStrip>

      <Toolbar>
        <AddressRow>
          <NavButton $off><ArrowLeft size={30} strokeWidth={2} /></NavButton>
          <NavButton $off><ArrowRight size={30} strokeWidth={2} /></NavButton>
          <NavButton><RotateCw size={28} strokeWidth={2.2} /></NavButton>
          <AddressBar>
            <InfoPill><Info size={28} strokeWidth={2} /></InfoPill>
            <AddressText>localhost:8501</AddressText>
            <AddressActions>
              <ZoomGlass />
              <Star size={30} strokeWidth={2} />
            </AddressActions>
          </AddressBar>
          <ToolButton>
            <RainbowSlot><RainbowIcon /></RainbowSlot>
            <NewBadge>New</NewBadge>
          </ToolButton>
          <ToolButton><PuzzleIcon /></ToolButton>
          <ToolDivider />
          <ToolButton><Download size={34} strokeWidth={2.2} /></ToolButton>
          <ToolButton><LeafBolt /></ToolButton>
          <ToolButton><QueueIcon /></ToolButton>
          <ToolButton><BatAvatar /></ToolButton>
          <ToolButton>
            <svg width="8" height="30" viewBox="0 0 8 30" fill="#c4c4c4">
              <circle cx="4" cy="4" r="3.5" /><circle cx="4" cy="15" r="3.5" /><circle cx="4" cy="26" r="3.5" />
            </svg>
          </ToolButton>
        </AddressRow>
        <BookmarkRow>
          <AppsButton><AppsIcon /></AppsButton>
          <BookmarkDivider />
          {bookmarks.map(b => (
            <Bookmark key={b.name} $w={b.w}>
              <BookmarkIcon>{b.icon}</BookmarkIcon>
              {b.name}
            </Bookmark>
          ))}
          <MoreBookmarks><ChevronsRight size={30} strokeWidth={2} /></MoreBookmarks>
        </BookmarkRow>
      </Toolbar>
      <LoadBar />

      <Page>
        <PageHeader>
          <span>Deploy</span>
          <svg width="8" height="26" viewBox="0 0 8 26" fill="#fafafa">
            <circle cx="4" cy="4" r="3.2" /><circle cx="4" cy="13" r="3.2" /><circle cx="4" cy="22" r="3.2" />
          </svg>
        </PageHeader>
        <Main>
          <Title>Expense Breakdown by Months</Title>
          <ExpenseChart />
          <DataTable>
            <colgroup><col /><col /><col /></colgroup>
            <thead>
              <tr><Th /><Th>Month Name</Th><Th>Total</Th></tr>
            </thead>
            <tbody>
              {rows.map(r => (
                <tr key={r.id}>
                  <Td $index>{r.id}</Td>
                  <Td>{r.month}</Td>
                  <Td>{r.total}</Td>
                </tr>
              ))}
            </tbody>
          </DataTable>
        </Main>
        <ScrollThumb />
      </Page>
    </Window>

    <Dock>
      {dockApps.map(app => app.divider ? (
        <DockDivider key={app.id} />
      ) : (
        <DockSlot key={app.id} $w={app.w}>
          <app.Icon />
          <RunningDot $on={app.on} />
          {app.badge && <DockBadge>{app.badge}</DockBadge>}
        </DockSlot>
      ))}
    </Dock>
  </Screen>
);

export default App;
